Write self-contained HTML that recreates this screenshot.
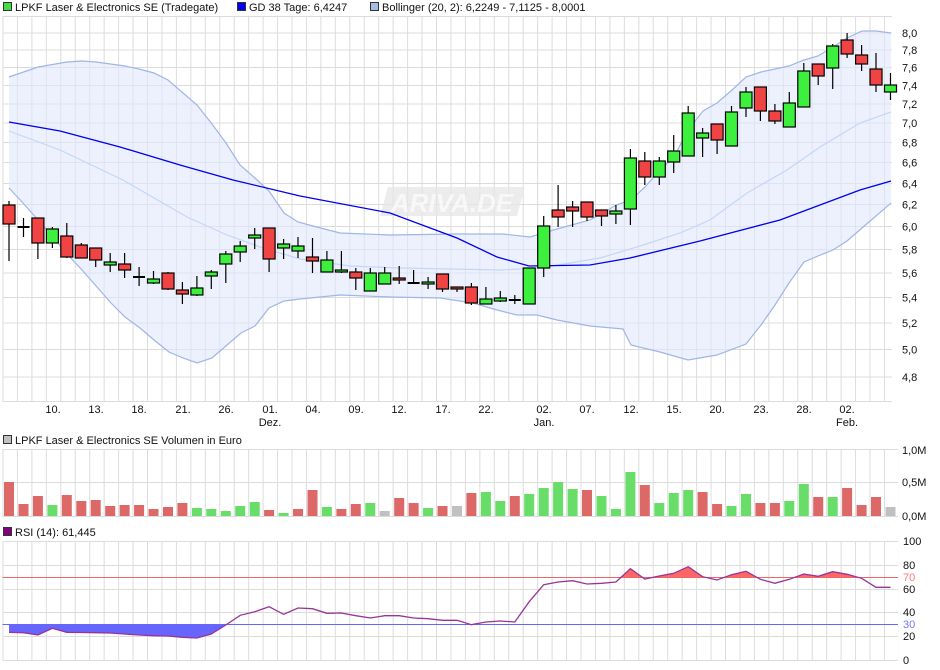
<!DOCTYPE html>
<html><head><meta charset="utf-8"><style>
html,body{margin:0;padding:0;background:#fff;width:940px;height:670px;overflow:hidden}
svg{display:block;font-family:"Liberation Sans",sans-serif;font-size:11px}
</style></head><body>
<svg width="940" height="670" viewBox="0 0 940 670">
<defs>
<pattern id="vg" patternUnits="userSpaceOnUse" x="2.5" y="0" width="14.45" height="10"><rect x="0" y="0" width="1" height="10" fill="#dcdcdc"/></pattern>
<clipPath id="cb"><rect x="0" y="624.3" width="940" height="40"/></clipPath>
<clipPath id="cr"><rect x="0" y="530" width="940" height="47.3"/></clipPath>
</defs>
<rect width="940" height="670" fill="#fff"/>
<!-- legend -->
<rect x="3.5" y="2.5" width="8" height="8" fill="#44dd44" stroke="#333"/>
<text x="15" y="11" fill="#111">LPKF Laser &amp; Electronics SE (Tradegate)</text>
<rect x="237.5" y="2.5" width="8" height="8" fill="#0000ee" stroke="#333"/>
<text x="249" y="11" fill="#111">GD 38 Tage: 6,4247</text>
<rect x="370.5" y="2.5" width="8" height="8" fill="#a8bce8" stroke="#333"/>
<text x="382" y="11" fill="#111">Bollinger (20, 2): 6,2249 - 7,1125 - 8,0001</text>

<!-- main grid -->
<rect x="2.5" y="16.5" width="890" height="385" fill="url(#vg)"/>
<path d="M2.5 16.5H892M2.5 33H892M2.5 50H892M2.5 67.5H892M2.5 85.5H892M2.5 104H892M2.5 123H892M2.5 142.5H892M2.5 162.5H892M2.5 183.5H892M2.5 204.5H892M2.5 226.5H892M2.5 249.5H892M2.5 273H892M2.5 297.5H892M2.5 323H892M2.5 349.5H892M2.5 377H892M2.5 401.5H892" stroke="#dcdcdc" stroke-width="1"/>

<!-- watermark -->
<polygon points="388,187 525,187 517,216 380,216" fill="#e6e6e6" opacity="0.75"/>
<text x="452" y="212" text-anchor="middle" font-size="26" font-weight="bold" font-style="italic" fill="#fafafa" opacity="0.9">ARIVA.DE</text>

<!-- bollinger band fill -->
<polygon fill="#dfe8fb" fill-opacity="0.6" stroke="none" points="9,77 38,67 67,62 82,61 96,62 125,66 139,69 154,73 168,80 197,105 212,124 226,143 240,165 255,178 269,191 284,213 298,222 313,226 340,233 390,235 457,234 503,234 530,237 543,233 557,229 590,220 603,213 616,205 631,200 645,187 660,170 674,157 688,130 703,111 717,103 732,90 746,77 761,72 775,69 789,66 804,60 818,56 833,47 847,38 862,31 876,31 891,33 891,203 876,216 862,228 847,241 833,250 818,256 804,262 789,283 775,305 761,325 746,344 717,355 688,360 660,352 631,345 623,329 590,326 557,320 537,315 517,315 497,310 473,303 440,298 390,297 340,295 300,299 284,301 269,308 255,326 241,333 227,345 212,358 197,363 183,358 169,352 154,340 140,328 125,317 111,303 97,287 82,270 67,254 53,237 38,220 23,203 9,188"/>
<polyline fill="none" stroke="#9fb6e6" stroke-width="1.2" points="9,77 38,67 67,62 82,61 96,62 125,66 139,69 154,73 168,80 197,105 212,124 226,143 240,165 255,178 269,191 284,213 298,222 313,226 340,233 390,235 457,234 503,234 530,237 543,233 557,229 590,220 603,213 616,205 631,200 645,187 660,170 674,157 688,130 703,111 717,103 732,90 746,77 761,72 775,69 789,66 804,60 818,56 833,47 847,38 862,31 876,31 891,33"/>
<polyline fill="none" stroke="#9fb6e6" stroke-width="1.2" points="9,188 23,203 38,220 53,237 67,254 82,270 97,287 111,303 125,317 140,328 154,340 169,352 183,358 197,363 212,358 227,345 241,333 255,326 269,308 284,301 300,299 340,295 390,297 440,298 473,303 497,310 517,315 537,315 557,320 590,326 623,329 631,345 660,352 688,360 717,355 746,344 761,325 775,305 789,283 804,262 818,256 833,250 847,241 862,228 876,216 891,203"/>
<polyline fill="none" stroke="#c4d6f8" stroke-width="1.2" points="9,131 60,150 123,180 187,217 227,235 260,247 300,259 350,266 400,268 500,270 540,268 600,258 640,246 680,233 710,220 747,193 787,170 820,147 860,123 891,112"/>
<polyline fill="none" stroke="#0000ee" stroke-width="1.3" points="9,122 60,131 120,147 180,165 233,180 300,196 390,213 457,238 497,257 529,266 590,265 630,258 700,241 780,220 860,190 891,181"/>

<!-- wicks -->
<path stroke="#000" stroke-width="1.2" fill="none" d="M9 201V261M23.5 218V237M37.9 218V259M52.4 227V248M66.8 223V258M81.3 243V258M95.7 248V267M110.2 253V272M124.6 253V278M139.1 267V286M153.5 271V284M168 272V290M182.4 282V304M196.9 276V296M211.3 270V289M225.8 251V283M240.2 241V262M254.7 228V249M269.1 228V272M283.6 239V259M298 237V258M312.5 238V273M326.9 251V272M341.4 251V273M355.8 268V290M370.3 268V291M384.7 267V284M399.2 266V284M413.6 270V284M428.1 277V289M442.5 274V292M457 287V292M471.4 283V305M485.9 287V304M500.3 291V302M514.8 295V304M529.2 268V304M543.7 216V277M558.1 185V227M572.6 201V227M587 202V221M601.5 210V226M615.9 205V224M630.4 149V225M644.8 152V185M659.3 157V185M673.7 135V173M688.2 106V156M702.6 128V157M717.1 124V154M731.5 106V146M746 87V117M760.4 87V121M774.9 104V124M789.3 92V127M803.8 63V107M818.2 64V85M832.7 44V89M847.1 33V58M861.6 45V71M876 53V92M890.5 73V100"/>
<path stroke="#000" stroke-width="2" d="M17.5 227H29.5M133 277H145M407.6 283H419.6M508.8 300H520.8"/>
<!-- bodies -->
<g stroke="#000" stroke-width="1.2">
<g fill="#f04444">
<rect x="3" y="205" width="12" height="19"/><rect x="31.9" y="218" width="12" height="25"/><rect x="60.8" y="236" width="12" height="21"/><rect x="75.3" y="245" width="12" height="13"/><rect x="89.7" y="248" width="12" height="12"/><rect x="118.6" y="264" width="12" height="6"/><rect x="162" y="273" width="12" height="16"/><rect x="176.4" y="290" width="12" height="4"/><rect x="263.1" y="228" width="12" height="31"/><rect x="306.5" y="257" width="12" height="4"/><rect x="349.8" y="272" width="12" height="6"/><rect x="393.2" y="278" width="12" height="2"/><rect x="436.5" y="274" width="12" height="15"/><rect x="451" y="287" width="12" height="2"/><rect x="465.4" y="287" width="12" height="16"/><rect x="552.1" y="210" width="12" height="7"/><rect x="566.6" y="207" width="12" height="4"/><rect x="581" y="202" width="12" height="15"/><rect x="595.5" y="210" width="12" height="6"/><rect x="638.8" y="161" width="12" height="16"/><rect x="711.1" y="124" width="12" height="16"/><rect x="754.4" y="87" width="12" height="24"/><rect x="768.9" y="111" width="12" height="10"/><rect x="812.2" y="64" width="12" height="12"/><rect x="841.1" y="40" width="12" height="14"/><rect x="855.6" y="55" width="12" height="9"/><rect x="870" y="69" width="12" height="16"/>
</g>
<g fill="#3ef03e">
<rect x="46.4" y="229" width="12" height="14"/><rect x="104.2" y="262" width="12" height="3"/><rect x="147.5" y="279" width="12" height="4"/><rect x="190.9" y="288" width="12" height="7"/><rect x="205.3" y="272" width="12" height="4"/><rect x="219.8" y="254" width="12" height="10"/><rect x="234.2" y="246" width="12" height="6"/><rect x="248.7" y="235" width="12" height="3"/><rect x="277.6" y="244" width="12" height="4"/><rect x="292" y="246" width="12" height="5"/><rect x="320.9" y="260" width="12" height="12"/><rect x="335.4" y="270" width="12" height="2"/><rect x="364.3" y="273" width="12" height="18"/><rect x="378.7" y="273" width="12" height="11"/><rect x="422.1" y="282" width="12" height="2"/><rect x="479.9" y="299" width="12" height="5"/><rect x="494.3" y="298" width="12" height="3"/><rect x="523.2" y="268" width="12" height="36"/><rect x="537.7" y="226" width="12" height="42"/><rect x="609.9" y="211" width="12" height="3"/><rect x="624.4" y="158" width="12" height="51"/><rect x="653.3" y="161" width="12" height="16"/><rect x="667.7" y="151" width="12" height="11"/><rect x="682.2" y="113" width="12" height="43"/><rect x="696.6" y="133" width="12" height="5"/><rect x="725.5" y="112" width="12" height="34"/><rect x="740" y="92" width="12" height="16"/><rect x="783.3" y="103" width="12" height="24"/><rect x="797.8" y="71" width="12" height="36"/><rect x="826.7" y="46" width="12" height="22"/><rect x="884.5" y="85" width="12" height="7"/>
</g></g>

<!-- price labels -->
<g fill="#111">
<text x="902" y="37">8,0</text><text x="902" y="54">7,8</text><text x="902" y="71.5">7,6</text><text x="902" y="89.5">7,4</text><text x="902" y="108">7,2</text><text x="902" y="127">7,0</text><text x="902" y="146.5">6,8</text><text x="902" y="166.5">6,6</text><text x="902" y="187.5">6,4</text><text x="902" y="208.5">6,2</text><text x="902" y="230.5">6,0</text><text x="902" y="253.5">5,8</text><text x="902" y="277">5,6</text><text x="902" y="301.5">5,4</text><text x="902" y="327">5,2</text><text x="902" y="353.5">5,0</text><text x="902" y="381">4,8</text>
</g>
<!-- date labels -->
<g fill="#111" text-anchor="middle">
<text x="53" y="413">10.</text><text x="96" y="413">13.</text><text x="139" y="413">18.</text><text x="183" y="413">21.</text><text x="226" y="413">26.</text><text x="270" y="413">01.</text><text x="313" y="413">04.</text><text x="356" y="413">09.</text><text x="399" y="413">12.</text><text x="443" y="413">17.</text><text x="486" y="413">22.</text><text x="544" y="413">02.</text><text x="587" y="413">07.</text><text x="631" y="413">12.</text><text x="674" y="413">15.</text><text x="717" y="413">20.</text><text x="761" y="413">23.</text><text x="804" y="413">28.</text><text x="847" y="413">02.</text>
<text x="270" y="426">Dez.</text><text x="544" y="426">Jan.</text><text x="847" y="426">Feb.</text>
</g>

<!-- volume -->
<rect x="3.5" y="435.5" width="8" height="8" fill="#c0c0c0" stroke="#333"/>
<text x="15" y="444" fill="#111">LPKF Laser &amp; Electronics SE Volumen in Euro</text>
<rect x="2.5" y="449" width="896" height="68" fill="url(#vg)"/>
<path d="M2.5 449.5H898M2.5 482.5H898M2.5 516.5H898" stroke="#dcdcdc"/>
<g fill="#dd6868">
<rect x="4" y="482" width="10" height="34"/><rect x="18.5" y="504" width="10" height="12"/><rect x="32.9" y="496" width="10" height="20"/><rect x="61.8" y="495" width="10" height="21"/><rect x="76.3" y="501" width="10" height="15"/><rect x="90.7" y="500" width="10" height="16"/><rect x="105.2" y="506" width="10" height="10"/><rect x="119.6" y="505" width="10" height="11"/><rect x="134.1" y="505" width="10" height="11"/><rect x="148.5" y="509" width="10" height="7"/><rect x="163" y="507" width="10" height="9"/><rect x="177.4" y="503" width="10" height="13"/><rect x="264.1" y="510" width="10" height="6"/><rect x="293" y="509" width="10" height="7"/><rect x="307.5" y="490" width="10" height="26"/><rect x="336.4" y="509" width="10" height="7"/><rect x="350.8" y="504" width="10" height="12"/><rect x="394.2" y="498" width="10" height="18"/><rect x="408.6" y="503" width="10" height="13"/><rect x="437.5" y="506" width="10" height="10"/><rect x="466.4" y="493" width="10" height="23"/><rect x="509.8" y="496" width="10" height="20"/><rect x="582" y="490" width="10" height="26"/><rect x="639.8" y="485" width="10" height="31"/><rect x="697.6" y="492" width="10" height="24"/><rect x="712.1" y="504" width="10" height="12"/><rect x="755.4" y="503" width="10" height="13"/><rect x="769.9" y="503" width="10" height="13"/><rect x="813.2" y="497" width="10" height="19"/><rect x="842.1" y="488" width="10" height="28"/><rect x="856.6" y="505" width="10" height="11"/><rect x="871" y="497" width="10" height="19"/>
</g>
<g fill="#68dd68">
<rect x="47.4" y="505" width="10" height="11"/><rect x="191.9" y="508" width="10" height="8"/><rect x="206.3" y="509" width="10" height="7"/><rect x="220.8" y="511" width="10" height="5"/><rect x="235.2" y="506" width="10" height="10"/><rect x="249.7" y="502" width="10" height="14"/><rect x="278.6" y="513" width="10" height="3"/><rect x="321.9" y="507" width="10" height="9"/><rect x="365.3" y="503" width="10" height="13"/><rect x="423.1" y="508" width="10" height="8"/><rect x="480.9" y="492" width="10" height="24"/><rect x="495.3" y="501" width="10" height="15"/><rect x="524.2" y="494" width="10" height="22"/><rect x="538.7" y="488" width="10" height="28"/><rect x="553.1" y="482" width="10" height="34"/><rect x="567.6" y="489" width="10" height="27"/><rect x="596.5" y="496" width="10" height="20"/><rect x="610.9" y="509" width="10" height="7"/><rect x="625.4" y="472" width="10" height="44"/><rect x="654.3" y="503" width="10" height="13"/><rect x="668.7" y="493" width="10" height="23"/><rect x="683.2" y="490" width="10" height="26"/><rect x="726.5" y="506" width="10" height="10"/><rect x="741" y="494" width="10" height="22"/><rect x="784.3" y="501" width="10" height="15"/><rect x="798.8" y="484" width="10" height="32"/><rect x="827.7" y="497" width="10" height="19"/>
</g>
<g fill="#c0c0c0"><rect x="379.7" y="511" width="10" height="5"/><rect x="452" y="506" width="10" height="10"/><rect x="885.5" y="507" width="10" height="9"/></g>
<g fill="#111"><text x="902" y="454">1,0M</text><text x="902" y="486">0,5M</text><text x="902" y="520">0,0M</text></g>

<!-- RSI -->
<rect x="3.5" y="527.5" width="8" height="8" fill="#800080" stroke="#333"/>
<text x="15" y="536" fill="#111">RSI (14): 61,445</text>
<rect x="2.5" y="541" width="896" height="120" fill="url(#vg)"/>
<path d="M2.5 541.5H898M2.5 565.5H898M2.5 589.5H898M2.5 612.5H898M2.5 636.5H898M2.5 660.5H898" stroke="#dcdcdc"/>
<g clip-path="url(#cb)"><polygon fill="#6666ff" points="9,624.3 9,632.3 23.5,632.7 37.9,635 52.4,628.3 66.8,632.3 81.3,632.5 95.7,632.7 110.2,633 124.6,634 139.1,635 153.5,635.7 168,636 182.4,637.3 196.9,638 211.3,634 225.8,625 240.2,615.3 240.2,624.3"/></g>
<g clip-path="url(#cr)"><polygon fill="#ff6666" points="601.5,577.3 601.5,583.3 615.9,582 630.4,568.7 644.8,579 659.3,576 673.7,573.3 688.2,566.7 702.6,576.7 717.1,580 731.5,574.7 746,571.3 760.4,579.3 774.9,583.3 789.3,579.3 803.8,574 818.2,576.3 832.7,571.7 847.1,574.3 861.6,578.3 876,587.3 876,577.3"/></g>
<path d="M2.5 577.5H898" stroke="#ee6666"/>
<path d="M2.5 624.5H898" stroke="#6666ff"/>
<polyline fill="none" stroke="#993399" stroke-width="1.3" points="9,632.3 23.5,632.7 37.9,635 52.4,628.3 66.8,632.3 81.3,632.5 95.7,632.7 110.2,633 124.6,634 139.1,635 153.5,635.7 168,636 182.4,637.3 196.9,638 211.3,634 225.8,625 240.2,615.3 254.7,611.7 269.1,606.7 283.6,614.3 298,608 312.5,608.7 326.9,613.3 341.4,613 355.8,615.7 370.3,618 384.7,615.7 399.2,615.7 413.6,618 428.1,618.7 442.5,620.3 457,620.3 471.4,624.7 485.9,622 500.3,621 514.8,622 529.2,601.7 543.7,584.7 558.1,582 572.6,580.7 587,584 601.5,583.3 615.9,582 630.4,568.7 644.8,579 659.3,576 673.7,573.3 688.2,566.7 702.6,576.7 717.1,580 731.5,574.7 746,571.3 760.4,579.3 774.9,583.3 789.3,579.3 803.8,574 818.2,576.3 832.7,571.7 847.1,574.3 861.6,578.3 876,587.3 890.5,587.3"/>
<g fill="#111"><text x="903" y="545">100</text><text x="903" y="569">80</text><text x="903" y="593">60</text><text x="903" y="616">40</text><text x="903" y="640">20</text><text x="903" y="664">0</text></g>
<text x="903" y="581" fill="#ff7777">70</text>
<text x="903" y="628" fill="#7777ff">30</text>
</svg>
</body></html>
